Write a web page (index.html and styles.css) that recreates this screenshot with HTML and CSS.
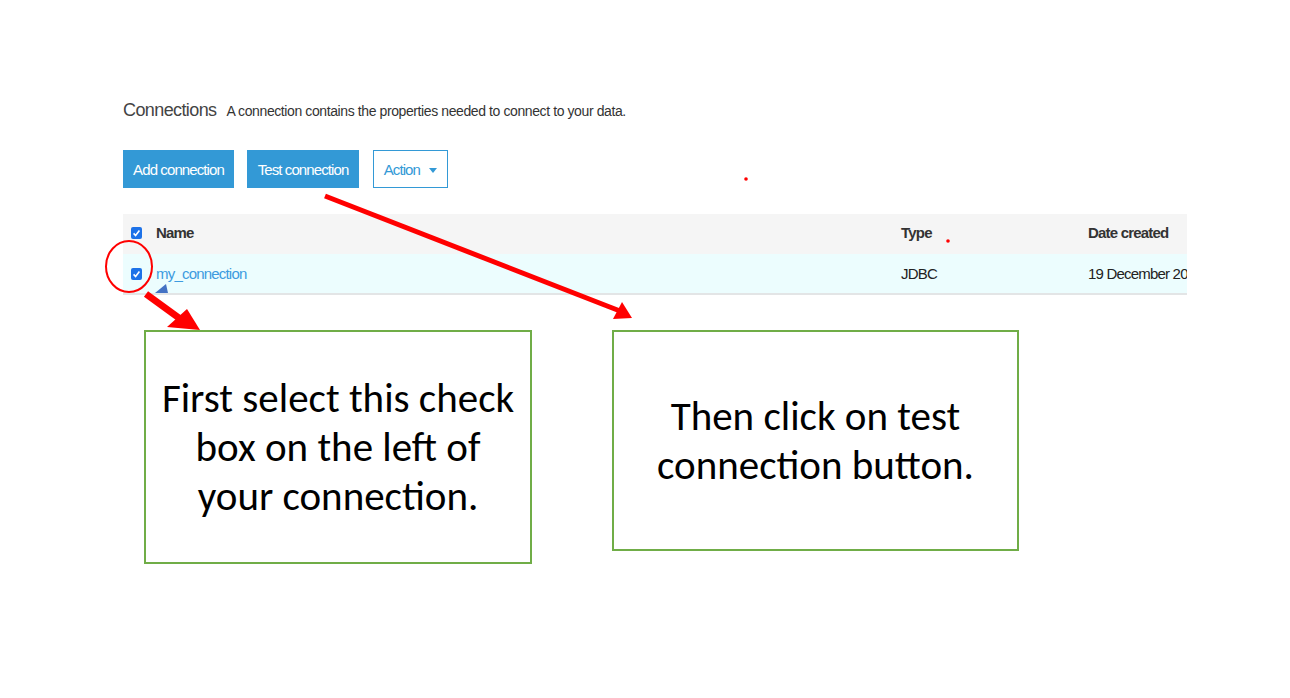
FILE: index.html
```html
<!DOCTYPE html>
<html lang="en">
<head>
    <meta charset="UTF-8">
    <meta name="viewport" content="width=device-width, initial-scale=1.0">
    <title>Test a connection</title>
    <link rel="stylesheet" href="styles.css">
</head>
<body>
    <div class="slide">
        <div class="screen">
            <div class="page-head">
                <span class="page-title">Connections</span>
                <span class="page-desc">A connection contains the properties needed to connect to your data.</span>
            </div>

            <div class="toolbar">
                <button class="btn btn-add">Add connection</button>
                <button class="btn btn-test">Test connection</button>
                <button class="btn btn-action">Action <span class="caret"></span></button>
            </div>

            <div class="table">
                <div class="row row-head">
                    <div class="cell cell-check">
                        <svg class="check" width="11" height="12" viewBox="0 0 11 12"><rect width="11" height="12" rx="2" fill="#1d72e8"/><path d="M2.6 6.4 L4.6 8.5 L8.4 3.6" fill="none" stroke="#fff" stroke-width="1.6"/></svg>
                    </div>
                    <div class="cell">Name</div>
                    <div class="cell">Type</div>
                    <div class="cell">Date created</div>
                </div>
                <div class="row row-item">
                    <div class="cell cell-check">
                        <svg class="check" width="11" height="12" viewBox="0 0 11 12"><rect width="11" height="12" rx="2" fill="#1d72e8"/><path d="M2.6 6.4 L4.6 8.5 L8.4 3.6" fill="none" stroke="#fff" stroke-width="1.6"/></svg>
                    </div>
                    <div class="cell link">my_connection</div>
                    <div class="cell">JDBC</div>
                    <div class="cell">19 December 2023</div>
                </div>
            </div>

            <div class="callouts">
                <div class="callout callout-first">First select this check<br>box on the left of<br>your connection.</div>
                <div class="callout callout-then">Then click on test<br>connection button.</div>
            </div>
        </div>

        <!-- annotations drawn over the screenshot -->
        <svg class="marks" viewBox="0 0 1290 698" width="1290" height="698">
            <ellipse cx="129" cy="266.5" rx="23" ry="25.5" fill="none" stroke="#ff0000" stroke-width="2"/>
            <polygon points="155,293 166,284 168,293" fill="#4472c4"/>
            <line x1="146" y1="294" x2="179" y2="318" stroke="#ff0000" stroke-width="7"/>
            <polygon points="200,330 187,309 167,327" fill="#ff0000"/>
            <line x1="325" y1="196" x2="620" y2="311" stroke="#ff0000" stroke-width="5"/>
            <polygon points="632,318 622,302 613,319" fill="#ff0000"/>
            <circle cx="746" cy="179" r="1.8" fill="#ff0000"/>
            <circle cx="948" cy="241" r="1.8" fill="#ff0000"/>
        </svg>
    </div>
</body>
</html>
```

FILE: styles.css
```css
body {
    margin: 0;
    background-color: #ffffff;
    font-family: "Liberation Sans", Arial, sans-serif;
    color: #333;
}

.slide {
    position: relative;
    width: 1290px;
    height: 698px;
    overflow: hidden;
}

.screen {
    padding: 98px 0 0 123px;
    width: 1064px;
}

.page-head {
    display: flex;
    align-items: baseline;
    gap: 10px;
    line-height: 24px;
}

.page-title {
    font-size: 18px;
    letter-spacing: -0.6px;
    color: #444;
}

.page-desc {
    font-size: 14px;
    letter-spacing: -0.4px;
    color: #333;
}

.toolbar {
    display: flex;
    gap: 13px;
    margin-top: 27px;
}

.btn {
    height: 38px;
    padding: 0;
    border: 1px solid #3399d6;
    background-color: #3399d6;
    color: #fff;
    font-family: inherit;
    font-size: 15px;
    letter-spacing: -0.9px;
    white-space: nowrap;
}

.btn-add {
    width: 111px;
}

.btn-test {
    width: 112px;
}

.btn-action {
    width: 75px;
    margin-left: 1px;
    background-color: #fff;
    color: #3399d6;
}

.caret {
    display: inline-block;
    margin-left: 6px;
    vertical-align: middle;
    border-left: 4px solid transparent;
    border-right: 4px solid transparent;
    border-top: 5px solid #3399d6;
}

.table {
    margin-top: 26px;
    width: 1064px;
    overflow: hidden;
}

.row {
    display: grid;
    grid-template-columns: 33px 745px 187px 200px;
    align-items: center;
    height: 40px;
    font-size: 15px;
    letter-spacing: -0.8px;
    white-space: nowrap;
}

.row-head {
    background-color: #f5f5f5;
    font-weight: bold;
    color: #333;
}

.row-head .cell {
    margin-top: -3px;
}

.row-item {
    height: 39px;
    background-color: #ecfdfe;
    border-bottom: 2px solid #e3e5e6;
    color: #222;
}

.cell-check {
    padding-left: 8px;
    display: flex;
}

.link {
    color: #3d9be0;
}

.callouts {
    display: flex;
    align-items: flex-start;
    gap: 80px;
    margin: 35px 0 0 21px;
}

.callout {
    box-sizing: border-box;
    display: flex;
    align-items: center;
    justify-content: center;
    border: 2px solid #70ad47;
    text-align: center;
    font-family: Carlito, "Open Sans", Lato, sans-serif;
    font-size: 41px;
    line-height: 49px;
    color: #000;
}

.callout-first {
    width: 388px;
    height: 234px;
}

.callout-then {
    width: 407px;
    height: 221px;
}

.marks {
    position: absolute;
    left: 0;
    top: 0;
    pointer-events: none;
}
```
